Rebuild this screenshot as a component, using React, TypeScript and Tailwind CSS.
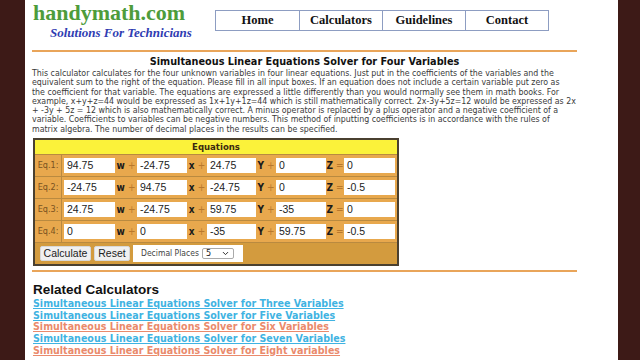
import { ChevronDown } from 'lucide-react'

const rows = [
  ['94.75', '-24.75', '24.75', '0', '0'],
  ['-24.75', '94.75', '-24.75', '0', '-0.5'],
  ['24.75', '-24.75', '59.75', '-35', '0'],
  ['0', '0', '-35', '59.75', '-0.5'],
]

const intro = [
  'This calculator calculates for the four unknown variables in four linear equations. Just put in the coefficients of the variables and the',
  'equivalent sum to the right of the equation. Please fill in all input boxes. If an equation does not include a certain variable put zero as',
  'the coefficient for that variable. The equations are expressed a little differently than you would normally see them in math books. For',
  'example, x+y+z=44 would be expressed as 1x+1y+1z=44 which is still mathematically correct. 2x-3y+5z=12 would be expressed as 2x',
  '+ -3y + 5z = 12 which is also mathematically correct. A minus operator is replaced by a plus operator and a negative coefficient of a',
  'variable. Coefficients to variables can be negative numbers. This method of inputting coefficients is in accordance with the rules of',
  'matrix algebra. The number of decimal places in the results can be specified.',
]

const related = [
  { text: 'Simultaneous Linear Equations Solver for Three Variables', blue: true },
  { text: 'Simultaneous Linear Equations Solver for Five Variables', blue: true },
  { text: 'Simultaneous Linear Equations Solver for Six Variables', blue: false },
  { text: 'Simultaneous Linear Equations Solver for Seven Variables', blue: true },
  { text: 'Simultaneous Linear Equations Solver for Eight variables', blue: false },
]

function Box({ value, w }: { value: string; w: string }) {
  return (
    <div className={`${w} h-[15px] bg-white pl-[3px] text-[10.5px] leading-[15px] text-[#222] font-['Liberation_Sans',sans-serif]`}>
      {value}
    </div>
  )
}

function Op({ v, op, w }: { v: string; op: string; w: string }) {
  return (
    <div className={`${w} flex items-center justify-center gap-[3px] text-[10px]`}>
      <span className="font-bold text-[#1a1a1a]">{v}</span>
      <span className="text-[#b8782c]">{op}</span>
    </div>
  )
}

export default function App() {
  return (
    <div className="flex w-[640px] h-[360px] overflow-hidden bg-white">
      <div className="w-[25px] shrink-0 bg-[#3d1a17]" />

      <main className="w-[593px] shrink-0 pl-[7px] pr-[41px]">
        {/* Header */}
        <div className="flex h-[50px]">
          <div className="w-[183px] shrink-0">
            <div className="pl-[1px] pt-[1px] text-[22px] leading-[24px] font-bold text-[#4e9c3b] font-['Liberation_Serif',serif]">
              handymath.com
            </div>
            <div className="pl-[18px] text-[13px] leading-[15px] font-bold italic text-[#2f3cb2] font-['Liberation_Serif',serif]">
              Solutions For Technicians
            </div>
          </div>
          <nav className="mt-[10px] h-[21px] flex border border-[#8d9dc2] font-['Liberation_Serif',serif] text-[12.5px] font-bold text-[#111]">
            {['Home', 'Calculators', 'Guidelines', 'Contact'].map((n, i) => (
              <div
                key={n}
                className={`w-[83px] flex items-center justify-center ${i > 0 ? 'border-l border-[#8d9dc2]' : ''}`}
              >
                {n}
              </div>
            ))}
          </nav>
        </div>
        <div className="h-[2px] bg-[#e9a55a]" />

        {/* Title + intro */}
        <h1 className="mt-[3px] text-center text-[10.8px] leading-[14px] font-bold text-[#111] font-['DejaVu_Sans_Condensed','DejaVu_Sans',sans-serif]">
          Simultaneous Linear Equations Solver for Four Variables
        </h1>
        <p className="whitespace-nowrap text-[8.75px] leading-[9.3px] text-[#3a3a3a] font-['DejaVu_Sans_Condensed','DejaVu_Sans',sans-serif]">
          {intro.map((line, i) => (
            <span key={i} className="block">
              {line}
            </span>
          ))}
        </p>

        {/* Equations table */}
        <div className="mt-[4px] ml-[1px] w-[366px] border-2 border-[#4a4030] font-['DejaVu_Sans_Condensed','DejaVu_Sans',sans-serif]">
          <div className="h-[14px] bg-[#fbf23a] text-center text-[9.5px] leading-[14px] font-bold text-[#3a2a10]">
            Equations
          </div>
          {rows.map((r, i) => (
            <div key={i} className="h-[22px] flex items-center border-t border-[#b98a40] bg-[#e8a84d]">
              <div className="w-[27px] h-full border-r border-[#b98a40] flex items-center justify-center text-[9px] text-[#7a5220]">
                Eq.{i + 1}:
              </div>
              <div className="ml-[2px]" />
              <Box value={r[0]} w="w-[51px]" />
              <Op v="w" op="+" w="w-[22px]" />
              <Box value={r[1]} w="w-[50px]" />
              <Op v="x" op="+" w="w-[20px]" />
              <Box value={r[2]} w="w-[49px]" />
              <Op v="Y" op="+" w="w-[20px]" />
              <Box value={r[3]} w="w-[50px]" />
              <Op v="Z" op="=" w="w-[18px]" />
              <Box value={r[4]} w="w-[51px]" />
            </div>
          ))}
          <div className="h-[22px] flex items-center gap-[3px] pl-[5px] border-t border-[#b98a40] bg-[#d39b3e]">
            <button className="w-[51px] h-[15px] rounded-[2px] border border-[#d8d8d8] bg-[#f0f0f0] text-[10.5px] leading-[13px] text-[#222] font-['Liberation_Sans',sans-serif]">
              Calculate
            </button>
            <button className="w-[36px] h-[15px] rounded-[2px] border border-[#d8d8d8] bg-[#f0f0f0] text-[10.5px] leading-[13px] text-[#222] font-['Liberation_Sans',sans-serif]">
              Reset
            </button>
            <div className="w-[110px] h-[17px] bg-white flex items-center pl-[8px] gap-[3px] text-[8.5px] text-[#444]">
              <span>Decimal Places</span>
              <div className="w-[32px] h-[11px] border border-[#aaa] rounded-[2px] flex items-center justify-between px-[3px] text-[9px] text-[#222]">
                <span>5</span>
                <ChevronDown size={9} strokeWidth={2.5} />
              </div>
            </div>
          </div>
        </div>

        <div className="mt-[4px] h-[2px] bg-[#e9a55a]" />

        {/* Related */}
        <h2 className="mt-[10px] ml-[1px] text-[13.5px] leading-[16px] font-bold text-[#111] font-['Liberation_Sans',sans-serif]">
          Related Calculators
        </h2>
        <ul className="ml-[1px] font-['DejaVu_Sans_Condensed','DejaVu_Sans',sans-serif] text-[10.6px] leading-[11.7px] font-bold">
          {related.map((l) => (
            <li key={l.text}>
              <a href="#" className={`underline ${l.blue ? 'text-[#3fb3e2]' : 'text-[#ea8a6c]'}`}>
                {l.text}
              </a>
            </li>
          ))}
        </ul>
      </main>

      <div className="flex-1 bg-[#3d1a17]" />
    </div>
  )
}
